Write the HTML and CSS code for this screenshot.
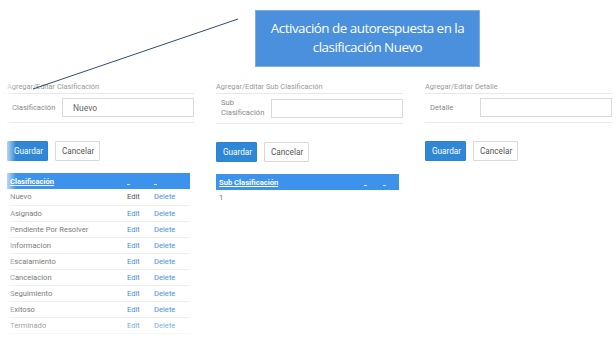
FILE: index.html
```html
<!DOCTYPE html>
<html lang="es">
<head>
  <meta charset="UTF-8" />
  <title>Clasificaciones</title>
  <link rel="stylesheet" href="styles.css">
</head>
<body>
  <div class="page">
    <div class="columns">

      <!-- Clasificacion -->
      <section class="col">
        <div class="col-title">Agregar/Editar Clasificación</div>
        <div class="form-row">
          <label class="form-label" for="clasificacion">Clasificación</label>
          <input class="form-input" type="text" id="clasificacion" value="Nuevo" />
        </div>
        <div class="actions">
          <button class="btn btn-primary" type="button">Guardar</button>
          <button class="btn btn-default" type="button">Cancelar</button>
        </div>
        <table class="grid">
          <thead>
            <tr>
              <th class="name"><a href="#">Clasificación</a></th>
              <th class="act"><span class="sort-mark"></span></th>
              <th class="act"><span class="sort-mark"></span></th>
            </tr>
          </thead>
          <tbody>
            <tr><td>Nuevo</td><td class="act"><a href="#" class="current">Edit</a></td><td class="act"><a href="#">Delete</a></td></tr>
            <tr><td>Asignado</td><td class="act"><a href="#">Edit</a></td><td class="act"><a href="#">Delete</a></td></tr>
            <tr><td>Pendiente Por Resolver</td><td class="act"><a href="#">Edit</a></td><td class="act"><a href="#">Delete</a></td></tr>
            <tr><td>Informacion</td><td class="act"><a href="#">Edit</a></td><td class="act"><a href="#">Delete</a></td></tr>
            <tr><td>Escalamiento</td><td class="act"><a href="#">Edit</a></td><td class="act"><a href="#">Delete</a></td></tr>
            <tr><td>Cancelacion</td><td class="act"><a href="#">Edit</a></td><td class="act"><a href="#">Delete</a></td></tr>
            <tr><td>Seguimiento</td><td class="act"><a href="#">Edit</a></td><td class="act"><a href="#">Delete</a></td></tr>
            <tr><td>Exitoso</td><td class="act"><a href="#">Edit</a></td><td class="act"><a href="#">Delete</a></td></tr>
            <tr><td>Terminado</td><td class="act"><a href="#">Edit</a></td><td class="act"><a href="#">Delete</a></td></tr>
          </tbody>
        </table>
      </section>

      <!-- Sub Clasificacion -->
      <section class="col">
        <div class="col-title">Agregar/Editar Sub Clasificación</div>
        <div class="form-row">
          <label class="form-label" for="subclasificacion">Sub<br>Clasificación</label>
          <input class="form-input" type="text" id="subclasificacion" />
        </div>
        <div class="actions">
          <button class="btn btn-primary" type="button">Guardar</button>
          <button class="btn btn-default" type="button">Cancelar</button>
        </div>
        <table class="grid grid-empty">
          <thead>
            <tr>
              <th class="name"><a href="#">Sub Clasificación</a></th>
              <th class="act"><span class="sort-mark"></span></th>
              <th class="act"><span class="sort-mark"></span></th>
            </tr>
          </thead>
        </table>
        <div class="pager">1</div>
      </section>

      <!-- Detalle -->
      <section class="col">
        <div class="col-title">Agregar/Editar Detalle</div>
        <div class="form-row">
          <label class="form-label" for="detalle">Detalle</label>
          <input class="form-input" type="text" id="detalle" />
        </div>
        <div class="actions">
          <button class="btn btn-primary" type="button">Guardar</button>
          <button class="btn btn-default" type="button">Cancelar</button>
        </div>
      </section>
    </div>

    <!-- Annotation -->
    <svg class="pointer" width="616" height="340" viewBox="0 0 616 340" aria-hidden="true">
      <line x1="238" y1="19" x2="33" y2="89" />
    </svg>
    <div class="callout">Activación de autorespuesta en la<br>clasificación Nuevo</div>

    <div class="fade-left"></div>
    <div class="fade-bottom"></div>
  </div>
</body>
</html>
```

FILE: styles.css
```css
/* Base */
* {
  box-sizing: border-box;
}

body {
  margin: 0;
  background: #fff;
  font-family: Roboto, 'Liberation Sans', sans-serif;
  color: #666;
}

.page {
  position: relative;
  width: 616px;
  height: 340px;
  overflow: hidden;
}

/* Columns */
.columns {
  display: grid;
  grid-template-columns: 187px 187px 187px;
  column-gap: 22px;
  padding: 81px 0 0 7px;
}

.col-title {
  font-size: 7.4px;
  line-height: 12px;
  color: #9a9a9a;
  border-bottom: 1px solid #e8e8e8;
}

.form-row {
  display: flex;
  align-items: center;
  padding: 4px 0 5px;
  border-bottom: 1px solid #e8e8e8;
}

.form-label {
  width: 55px;
  padding-left: 5px;
  font-size: 7.6px;
  line-height: 10px;
  color: #888;
}

.form-input {
  width: 132px;
  height: 19px;
  border: 1px solid #dadada;
  padding: 0 10px;
  font-family: inherit;
  font-size: 8.5px;
  color: #666;
  outline: none;
}

/* Buttons */
.actions {
  display: flex;
  gap: 7px;
  margin-top: 18px;
}

.btn {
  height: 20px;
  padding: 0 6px;
  font-family: inherit;
  font-size: 8.2px;
  cursor: pointer;
  border-radius: 1px;
}

.btn-primary {
  width: 41px;
  background: #2f87d6;
  border: 1px solid #2c82cf;
  color: #fff;
}

.btn-default {
  width: 45px;
  background: #fff;
  border: 1px solid #d9d9d9;
  color: #555;
}

/* Grids */
.grid {
  width: 183px;
  margin-top: 12px;
  border-collapse: collapse;
  font-size: 7.6px;
}

.grid th {
  height: 16px;
  background: #3d92ec;
  text-align: left;
  padding: 0 0 0 3px;
}

.grid th a {
  color: #fff;
  font-weight: 700;
  text-decoration: underline;
}

.sort-mark {
  display: inline-block;
  width: 3px;
  height: 1px;
  margin-top: 9px;
  background: #dbe9fb;
}

.grid td {
  height: 16px;
  padding: 0 0 0 3px;
  border-bottom: 1px solid #eeeeee;
  color: #7a7a7a;
}

.grid .name {
  width: 117px;
}

.grid .act {
  width: 27px;
}

.grid td.act a {
  color: #4a8fd8;
  text-decoration: none;
}

.grid td.act a.current {
  color: #555;
}

.grid td.act:last-child,
.grid th.act:last-child {
  width: 39px;
}

.grid-empty .name {
  width: 144px;
}

.grid-empty .act,
.grid-empty th.act:last-child {
  width: 19px;
}

.pager {
  font-size: 7.6px;
  color: #777;
  padding: 3px 0 0 3px;
}

/* Annotation over the page */
.pointer {
  position: absolute;
  top: 0;
  left: 0;
}

.pointer line {
  stroke: #2e4d75;
  stroke-width: 1;
}

.callout {
  position: absolute;
  top: 10px;
  left: 255px;
  width: 225px;
  height: 57px;
  background: #4a90dc;
  border: 1px solid #79aee6;
  color: #fff;
  font-family: 'Open Sans', sans-serif;
  font-size: 13.4px;
  letter-spacing: -0.5px;
  line-height: 19px;
  text-align: center;
  padding-top: 8px;
}

.fade-left {
  position: absolute;
  top: 75px;
  left: 0;
  width: 16px;
  height: 265px;
  background: linear-gradient(to right, #fff 15%, rgba(255, 255, 255, 0));
}

.fade-bottom {
  position: absolute;
  left: 0;
  bottom: 0;
  width: 200px;
  height: 22px;
  background: linear-gradient(to bottom, rgba(255, 255, 255, 0), rgba(255, 255, 255, 0.75));
}
```
